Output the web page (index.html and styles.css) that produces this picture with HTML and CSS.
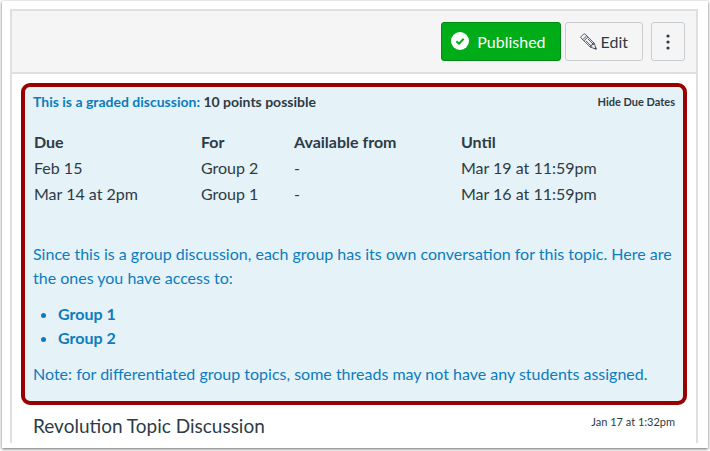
FILE: index.html
```html
<!DOCTYPE html>
<html lang="en">
<head>
    <meta charset="UTF-8">
    <meta name="viewport" content="width=device-width, initial-scale=1.0">
    <title>Revolution Topic Discussion</title>
    <link rel="stylesheet" href="styles.css">
</head>
<body>
    <div class="frame">
        <main class="panel">
            <div class="toolbar">
                <button type="button" class="btn published">
                    <svg width="18" height="20" viewBox="0 0 18 20" aria-hidden="true">
                        <circle cx="9" cy="9" r="9" fill="#fff"/>
                        <path d="M5.4 9.2l2.6 2.5 4.7-4.9" fill="none" stroke="#00ac18" stroke-width="2"/>
                    </svg>
                    Published
                </button>
                <button type="button" class="btn edit">
                    <svg width="17" height="17" viewBox="0 0 17 17" fill="none" stroke="#394b58" stroke-width=".9" stroke-linejoin="round" aria-hidden="true">
                        <path d="M1.1 3.6L3.6 1.1Q4.3.5 5 1.1L14.3 10.3 16.2 16.1 10.4 14.2 1.1 5Q.5 4.3 1.1 3.6z"/>
                        <path d="M2.8 6.6L6.6 2.8M4 7.8L7.8 4M6 7.8l6 6M7.9 5.9l6 6M10.4 14.2l.5-2 1.6-.3.2-1.4 1.6-.2"/>
                        <path d="M14.6 15.6l1-1 .6 1.5z" fill="#394b58"/>
                    </svg>
                    Edit
                </button>
                <button type="button" class="btn more" aria-label="Manage discussion">
                    <svg width="4" height="16" viewBox="0 0 4 16" fill="#2d3b45" aria-hidden="true">
                        <circle cx="2" cy="2" r="1.6"/>
                        <circle cx="2" cy="8" r="1.6"/>
                        <circle cx="2" cy="14" r="1.6"/>
                    </svg>
                </button>
            </div>

            <section class="notice">
                <div class="notice-top">
                    <div class="graded"><span>This is a graded discussion:</span> 10 points possible</div>
                    <a href="#" class="toggle">Hide Due Dates</a>
                </div>

                <table class="dates">
                    <thead>
                        <tr>
                            <th class="due">Due</th>
                            <th class="for">For</th>
                            <th class="from">Available from</th>
                            <th>Until</th>
                        </tr>
                    </thead>
                    <tbody>
                        <tr>
                            <td>Feb 15</td>
                            <td>Group 2</td>
                            <td>-</td>
                            <td>Mar 19 at 11:59pm</td>
                        </tr>
                        <tr>
                            <td>Mar 14 at 2pm</td>
                            <td>Group 1</td>
                            <td>-</td>
                            <td>Mar 16 at 11:59pm</td>
                        </tr>
                    </tbody>
                </table>

                <p>Since this is a group discussion, each group has its own conversation for this topic. Here are the ones you have access to:</p>
                <ul class="groups">
                    <li><a href="#">Group 1</a></li>
                    <li><a href="#">Group 2</a></li>
                </ul>
                <p>Note: for differentiated group topics, some threads may not have any students assigned.</p>
            </section>

            <div class="topic">
                <h1>Revolution Topic Discussion</h1>
                <time>Jan 17 at 1:32pm</time>
            </div>
        </main>
    </div>
</body>
</html>
```

FILE: styles.css
```css
* {
    box-sizing: border-box;
}

body {
    margin: 0;
    background-color: #fff;
    color: #2d3b45;
    font: 16px/24px Lato, sans-serif;
}

.frame {
    margin: 1px 2px 3px;
    padding: 8px 10px 5px 8px;
    background-color: #fff;
    box-shadow: 0 1px 3px #666;
}

.panel {
    border: 2px solid #dde1e4;
    border-bottom: 0;
}

/* toolbar */
.toolbar {
    display: flex;
    justify-content: flex-end;
    padding: 11px;
    background-color: #f5f5f5;
    border-bottom: 2px solid #dde1e4;
}

.btn {
    display: flex;
    align-items: center;
    justify-content: center;
    height: 39px;
    padding: 0 14px;
    border: 1px solid #c7cdd1;
    border-radius: 3px;
    background-color: #f5f5f5;
    color: #2d3b45;
    font: inherit;
}

.published {
    gap: 8px;
    padding: 0 14px 0 9px;
    background-color: #00ac18;
    border-color: #008a13;
    color: #fff;
}

.edit {
    gap: 4px;
    margin: 0 8px 0 4px;
}

/* due dates box */
.notice {
    margin: 9px 9px 0;
    padding: 3px 8px 15px;
    border: 4px solid #900;
    border-radius: 9px;
    background-color: #e5f2f8;
    color: #0c7cbf;
}

.notice a {
    color: inherit;
    font-weight: bold;
    text-decoration: none;
}

.notice-top {
    display: flex;
    justify-content: space-between;
    align-items: center;
}

.graded {
    color: #2d3b45;
    font-size: 14px;
    font-weight: bold;
}

.graded span {
    color: #0c7cbf;
}

.notice .toggle {
    color: #2d3b45;
    font-size: 11px;
}

.dates {
    width: 100%;
    margin: 15px 0 35px;
    border-collapse: collapse;
    color: #2d3b45;
    text-align: left;
}

.dates th,
.dates td {
    height: 26px;
    padding: 0 1px;
}

.due,
.from {
    width: 26%;
}

.for {
    width: 14.5%;
}

.notice p {
    margin: 0;
}

.groups {
    margin: 12px 0;
    padding-left: 25px;
}

/* topic heading */
.topic {
    display: flex;
    justify-content: space-between;
    padding: 5px 21px 2px;
}

.topic h1 {
    margin: 0;
    font-size: 19px;
    font-weight: normal;
    line-height: 31px;
}

.topic time {
    font-size: 11px;
}
```
